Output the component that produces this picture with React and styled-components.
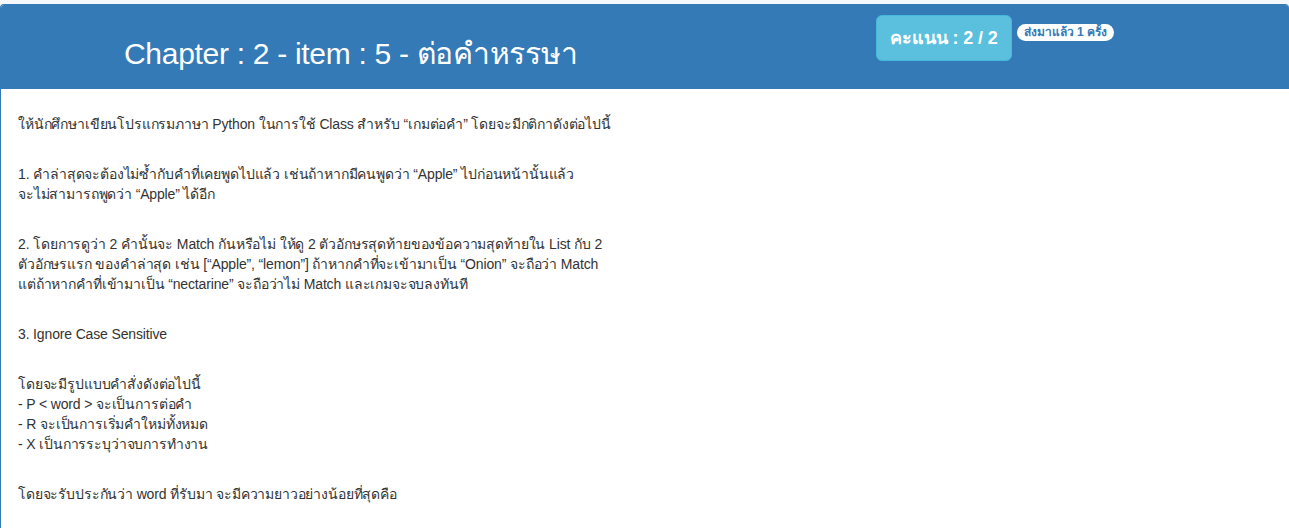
import React from "react";
import styled, { createGlobalStyle } from "styled-components";

const GlobalStyle = createGlobalStyle`
  html, body {
    margin: 0;
    padding: 0;
    background: #f5f8fb;
  }
  body {
    font-family: "Liberation Sans", Arial, "Noto Sans", Tahoma, sans-serif;
    font-size: 14px;
    color: #333;
  }
`;

const rules = [
  ["ให้นักศึกษาเขียนโปรแกรมภาษา Python ในการใช้ Class สำหรับ “เกมต่อคำ” โดยจะมีกติกาดังต่อไปนี้"],
  [
    "1. คำล่าสุดจะต้องไม่ซ้ำกับคำที่เคยพูดไปแล้ว เช่นถ้าหากมีคนพูดว่า “Apple” ไปก่อนหน้านั้นแล้ว",
    "จะไม่สามารถพูดว่า “Apple” ได้อีก",
  ],
  [
    "2. โดยการดูว่า 2 คำนั้นจะ Match กันหรือไม่ ให้ดู 2 ตัวอักษรสุดท้ายของข้อความสุดท้ายใน List กับ 2",
    "ตัวอักษรแรก ของคำล่าสุด เช่น [“Apple”, “lemon”] ถ้าหากคำที่จะเข้ามาเป็น “Onion” จะถือว่า Match",
    "แต่ถ้าหากคำที่เข้ามาเป็น “nectarine” จะถือว่าไม่ Match และเกมจะจบลงทันที",
  ],
  ["3. Ignore Case Sensitive"],
  [
    "โดยจะมีรูปแบบคำสั่งดังต่อไปนี้",
    "- P < word > จะเป็นการต่อคำ",
    "- R จะเป็นการเริ่มคำใหม่ทั้งหมด",
    "- X เป็นการระบุว่าจบการทำงาน",
  ],
  ["โดยจะรับประกันว่า word ที่รับมา จะมีความยาวอย่างน้อยที่สุดคือ"],
];

function App() {
  return (
    <>
      <GlobalStyle />
      <Panel>
        <Heading>
          <Title>Chapter : 2 - item : 5 - ต่อคำหรรษา</Title>
          <ScoreArea>
            <ScoreButton>คะแนน : 2 / 2</ScoreButton>
            <Badge>ส่งมาแล้ว 1 ครั้ง</Badge>
          </ScoreArea>
        </Heading>
        <Body>
          {rules.map((lines, i) => (
            <Paragraph key={i}>
              {lines.map((line, j) => (
                <Line key={j}>{line}</Line>
              ))}
            </Paragraph>
          ))}
        </Body>
      </Panel>
    </>
  );
}

const Panel = styled.div`
  margin-top: 4px;
  width: 100%;
  box-sizing: border-box;
  border: 1px solid #337ab7;
  border-right: none;
  border-bottom: none;
  border-radius: 4px 4px 0 0;
  background: #fff;
  overflow: hidden;
`;

const Heading = styled.div`
  display: flex;
  align-items: flex-start;
  height: 84px;
  box-sizing: border-box;
  background: #337ab7;
  color: #fff;
  padding-left: 123px;
`;

const Title = styled.h2`
  margin: 0;
  width: 752px;
  padding-top: 31px;
  font-size: 30px;
  font-weight: 400;
  line-height: 36px;
  letter-spacing: -0.3px;
  font-family: "Liberation Sans", Arial, Tahoma, sans-serif;
`;

const ScoreArea = styled.div`
  display: flex;
  align-items: flex-start;
  gap: 5px;
  padding-top: 10px;
`;

const ScoreButton = styled.div`
  box-sizing: border-box;
  height: 46px;
  padding: 10px 13px;
  border: 1px solid #46b8da;
  border-radius: 6px;
  background: #5bc0de;
  color: #fff;
  font-size: 18px;
  font-weight: 700;
  line-height: 24px;
  letter-spacing: -0.1px;
  white-space: nowrap;
`;

const Badge = styled.span`
  margin-top: 9px;
  padding: 2px 7px;
  border-radius: 10px;
  background: #fff;
  color: #337ab7;
  font-size: 12px;
  font-weight: 700;
  line-height: 13px;
  white-space: nowrap;
`;

const Body = styled.div`
  padding: 25px 17px 0;
`;

const Paragraph = styled.div`
  margin-bottom: 30px;
`;

const Line = styled.div`
  font-size: 14px;
  line-height: 20px;
  letter-spacing: -0.15px;
  color: #333;
  white-space: nowrap;
`;

export default App;
